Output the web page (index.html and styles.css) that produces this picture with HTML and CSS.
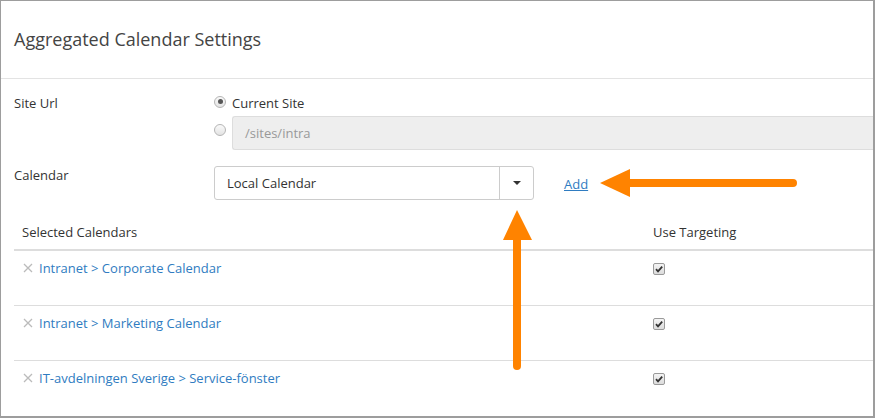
FILE: index.html
```html
<!DOCTYPE html>
<html>
<head>
<meta charset="utf-8">
<link rel="stylesheet" href="styles.css">
</head>
<body>
<div class="frame">
  <div class="header"><h1 class="title">Aggregated Calendar Settings</h1></div>
  <div class="form">
    <div class="field">
      <div class="label">Site Url</div>
      <div class="control">
        <div class="radio-row first">
          <span class="radio checked"></span><span class="radio-text">Current Site</span>
        </div>
        <div class="radio-row">
          <span class="radio"></span><div class="url-input">/sites/intra</div>
        </div>
      </div>
    </div>
    <div class="field cal">
      <div class="label">Calendar</div>
      <div class="control row">
        <div class="select">
          <span class="select-text">Local Calendar</span>
          <span class="select-btn"><span class="caret"></span></span>
        </div>
        <a class="add" href="#">Add</a>
      </div>
    </div>
  </div>
  <div class="table">
    <div class="thead">
      <div class="c1">Selected Calendars</div>
      <div class="c2">Use Targeting</div>
    </div>
    <div class="trow">
      <div class="c1"><span class="x"><svg viewBox="0 0 10 10" width="10" height="10"><path d="M1 1 L9 9 M9 1 L1 9" stroke="#bbb" stroke-width="1.3"/></svg></span><a class="cal-link" href="#">Intranet &gt; Corporate Calendar</a></div>
      <div class="c2"><span class="check"><svg viewBox="0 0 12 12" width="12" height="12"><path d="M3 6.2 L5 8.3 L9.2 3.6" fill="none" stroke="#333" stroke-width="1.8"/></svg></span></div>
    </div>
    <div class="trow">
      <div class="c1"><span class="x"><svg viewBox="0 0 10 10" width="10" height="10"><path d="M1 1 L9 9 M9 1 L1 9" stroke="#bbb" stroke-width="1.3"/></svg></span><a class="cal-link" href="#">Intranet &gt; Marketing Calendar</a></div>
      <div class="c2"><span class="check"><svg viewBox="0 0 12 12" width="12" height="12"><path d="M3 6.2 L5 8.3 L9.2 3.6" fill="none" stroke="#333" stroke-width="1.8"/></svg></span></div>
    </div>
    <div class="trow last">
      <div class="c1"><span class="x"><svg viewBox="0 0 10 10" width="10" height="10"><path d="M1 1 L9 9 M9 1 L1 9" stroke="#bbb" stroke-width="1.3"/></svg></span><a class="cal-link" href="#">IT-avdelningen Sverige &gt; Service-fönster</a></div>
      <div class="c2"><span class="check"><svg viewBox="0 0 12 12" width="12" height="12"><path d="M3 6.2 L5 8.3 L9.2 3.6" fill="none" stroke="#333" stroke-width="1.8"/></svg></span></div>
    </div>
  </div>
  <svg class="arrows" width="875" height="418" viewBox="0 0 875 418">
    <line x1="793" y1="183" x2="625" y2="183" stroke="#ff8300" stroke-width="8" stroke-linecap="round"/>
    <polygon points="600,183 630,169 630,197" fill="#ff8300"/>
    <line x1="517" y1="366" x2="517" y2="236" stroke="#ff8300" stroke-width="8" stroke-linecap="round"/>
    <polygon points="517,210 503,240 532,240" fill="#ff8300"/>
  </svg>
</div>
</body>
</html>
```
FILE: styles.css
```css
* { box-sizing: border-box; }
html, body { margin: 0; padding: 0; }
body {
  font-family: "Open Sans", "DejaVu Sans", sans-serif;
  font-size: 13px;
  color: #333;
  background: #fff;
}
.frame {
  position: relative;
  width: 875px;
  height: 418px;
  border: 1px solid #9d9d9d;
  border-right-width: 2px;
  border-bottom-width: 2px;
  overflow: hidden;
}
.header {
  height: 78px;
  border-bottom: 1px solid #e3e3e3;
  display: flex;
  align-items: center;
  padding: 0 0 2px 13px;
}
.title {
  margin: 0;
  font-size: 18px;
  font-weight: 400;
  color: #444;
}
.form {
  padding: 14px 0 0 13px;
}
.field {
  display: flex;
}
.label {
  width: 200px;
  line-height: 18px;
  padding-top: 1px;
  color: #333;
}
.control { flex: 1; }
.radio-row {
  display: flex;
  align-items: center;
}
.radio-row.first { height: 19px; margin-bottom: 4px; }
.radio {
  width: 12px;
  height: 12px;
  border-radius: 50%;
  border: 1px solid #b5b5b5;
  background: linear-gradient(#fafafa, #e3e3e3);
  margin-right: 6px;
  flex: none;
  position: relative;
  top: -1px;
}
.radio-row:not(.first) .radio { top: -3px; }
.radio.checked::after {
  content: "";
  position: absolute;
  left: 2.5px;
  top: 2.5px;
  width: 5px;
  height: 5px;
  border-radius: 50%;
  background: #555;
}
.radio-text { color: #333; }
.url-input {
  flex: 1;
  height: 34px;
  background: #eee;
  border: 1px solid #ddd;
  border-right: none;
  border-radius: 3px 0 0 3px;
  padding-left: 12px;
  line-height: 32px;
  color: #999;
}
.field.cal { margin-top: 16px; }
.cal .label { padding-top: 0; }
.row { display: flex; align-items: center; }
.select {
  width: 320px;
  height: 34px;
  border: 1px solid #ccc;
  border-radius: 3px;
  display: flex;
  align-items: center;
}
.select-text {
  flex: 1;
  padding-left: 12px;
  color: #333;
}
.select-btn {
  width: 34px;
  height: 32px;
  border-left: 1px solid #ccc;
  display: flex;
  align-items: center;
  justify-content: center;
}
.caret {
  width: 0;
  height: 0;
  border-left: 4px solid transparent;
  border-right: 4px solid transparent;
  border-top: 4px solid #333;
}
.add {
  margin-left: 30px;
  color: #2f7cc1;
  text-decoration: underline;
  position: relative;
  top: 1px;
}
.table {
  margin: 15px 0 0 13px;
}
.thead, .trow {
  display: flex;
}
.thead {
  height: 36px;
  align-items: center;
  border-bottom: 2px solid #ddd;
}
.thead .c1, .thead .c2 { color: #333; }
.c1 { width: 631px; padding-left: 8px; display: flex; align-items: center; }
.c2 { flex: 1; padding-left: 8px; }
.trow {
  height: 55px;
  border-bottom: 1px solid #ddd;
  padding-top: 9px;
  align-items: flex-start;
}
.trow.last { border-bottom: none; }
.trow .c1, .trow .c2 { line-height: 16px; }
.x {
  width: 17px;
  padding-left: 1px;
  display: flex;
  align-items: center;
  height: 16px;
}
.cal-link {
  color: #2f7cc1;
  text-decoration: none;
}
.check {
  display: inline-block;
  width: 12px;
  height: 12px;
  border: 1px solid #9a9a9a;
  border-radius: 2px;
  background: linear-gradient(#f4f4f4, #dcdcdc);
  position: relative;
  top: 2px;
  line-height: 0;
}
.check svg { position: absolute; left: -1px; top: -1px; }
.arrows {
  position: absolute;
  left: -1px;
  top: -1px;
  pointer-events: none;
}
```
